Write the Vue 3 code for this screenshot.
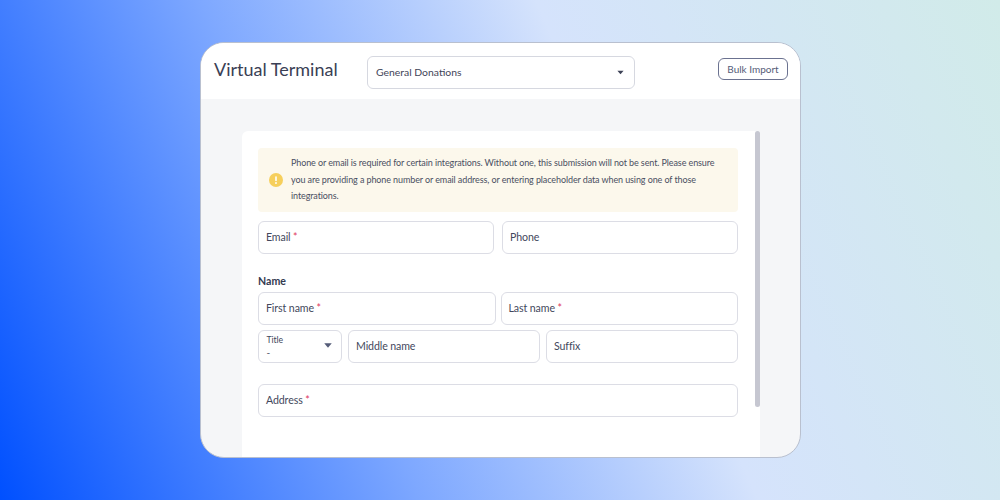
<script setup>
const row1 = [{ label: 'Email', req: true }, { label: 'Phone', req: false }]
const row2 = [{ label: 'First name', req: true }, { label: 'Last name', req: true }]
</script>

<template>
  <div class="page">
    <div class="window">
      <header class="header">
        <h1 class="title">Virtual Terminal</h1>
        <div class="select">
          <span>General Donations</span>
          <svg class="caret-small" viewBox="0 0 8 5"><path d="M0.5 0.5h7L4 4.5z" /></svg>
        </div>
        <button class="bulk">Bulk Import</button>
      </header>
      <main class="body">
        <div class="card">
          <div class="scrollbar"></div>
          <div class="alert">
            <svg class="alert-icon" viewBox="0 0 14 14">
              <circle cx="7" cy="7" r="7" fill="#f6cf5c" />
              <rect x="6.2" y="3.2" width="1.6" height="5" rx="0.8" fill="#fff" />
              <circle cx="7" cy="10" r="0.95" fill="#fff" />
            </svg>
            <p>Phone or email is required for certain integrations. Without one, this submission will not be sent. Please ensure you are providing a phone number or email address, or entering placeholder data when using one of those integrations.</p>
          </div>
          <div class="row row-a">
            <div v-for="f in row1" :key="f.label" class="field">{{ f.label }}<span v-if="f.req" class="req"> *</span></div>
          </div>
          <div class="section">Name</div>
          <div class="row row-b">
            <div v-for="f in row2" :key="f.label" class="field">{{ f.label }}<span v-if="f.req" class="req"> *</span></div>
          </div>
          <div class="row row-c">
            <div class="field title-field">
              <div class="title-text">
                <span class="mini">Title</span>
                <span class="dash">-</span>
              </div>
              <svg class="caret" viewBox="0 0 10 6"><path d="M0.3 0.3h9.4L5 5.7z" /></svg>
            </div>
            <div class="field middle">Middle name</div>
            <div class="field suffix">Suffix</div>
          </div>
          <div class="field address">Address<span class="req"> *</span></div>
        </div>
      </main>
    </div>
  </div>
</template>

<style scoped>
.page {
  width: 1000px;
  height: 500px;
  box-sizing: border-box;
  padding: 42px 0 0 200px;
  overflow: hidden;
  font-family: "Lato", "Noto Sans", sans-serif;
  color: #3d4256;
  background: linear-gradient(66deg, #0050ff 0%, #7ea8ff 34.6%, #d5e3fc 62%, #d1ebe9 100%);
}
.window {
  width: 601px;
  height: 416px;
  box-sizing: border-box;
  border: 1px solid #b9c0cf;
  border-radius: 24px;
  overflow: hidden;
  display: flex;
  flex-direction: column;
  background: #f5f6f8;
}
.header {
  flex: 0 0 56px;
  display: flex;
  align-items: flex-start;
  background: #fff;
}
.title {
  margin: 16px 0 0 13px;
  width: 153px;
  font-size: 18px;
  line-height: 20px;
  font-weight: 400;
  color: #3a4055;
  white-space: nowrap;
}
.select {
  margin-top: 13px;
  width: 268px;
  height: 33px;
  box-sizing: border-box;
  border: 1px solid #d6d8e0;
  border-radius: 6px;
  display: flex;
  align-items: center;
  justify-content: space-between;
  padding: 0 10px 1px 8px;
  font-size: 10.4px;
  color: #3f4458;
}
.caret-small {
  width: 7px;
  height: 5px;
  fill: #3d4256;
}
.bulk {
  margin: 15px 12px 0 auto;
  width: 70px;
  height: 22px;
  padding: 0;
  background: #fff;
  border: 1px solid #6b7290;
  border-radius: 6px;
  font: inherit;
  font-size: 10px;
  color: #555c78;
}
.body {
  flex: 1;
  min-height: 0;
  padding: 32px 40px 0 41px;
}
.card {
  position: relative;
  height: 100%;
  box-sizing: border-box;
  background: #fff;
  border-radius: 6px 6px 0 0;
  padding: 17px 22px 0 16px;
  display: flex;
  flex-direction: column;
}
.scrollbar {
  position: absolute;
  top: 0;
  right: 0.5px;
  width: 4.5px;
  height: 276px;
  border-radius: 3px;
  background: #c6c7d1;
}
.alert {
  height: 64px;
  box-sizing: border-box;
  display: flex;
  align-items: center;
  gap: 8px;
  padding: 0 10px 0 11px;
  background: #fcf8ec;
  border-radius: 4px;
}
.alert-icon {
  flex: 0 0 14px;
  width: 14px;
  height: 14px;
}
.alert p {
  margin: 0;
  font-size: 9px;
  letter-spacing: -0.1px;
  line-height: 16.5px;
  color: #4a4f62;
}
.row {
  display: flex;
}
.row-a {
  margin-top: 9px;
  gap: 8px;
}
.row-b {
  gap: 5px;
}
.row-c {
  margin-top: 5.5px;
  gap: 6px;
}
.field {
  flex: 1;
  height: 32.5px;
  box-sizing: border-box;
  border: 1px solid #dcdde5;
  border-radius: 6px;
  padding: 0 7px 1px;
  display: flex;
  align-items: center;
  white-space: pre;
  font-size: 10.6px;
  letter-spacing: -0.1px;
  color: #43485c;
}
.req {
  color: #e0395f;
}
.section {
  margin-top: 21px;
  height: 17.5px;
  font-size: 10.6px;
  line-height: 13px;
  font-weight: 700;
  color: #333950;
}
.title-field {
  flex: 0 0 84px;
  justify-content: space-between;
  padding-right: 9px;
}
.title-text {
  display: flex;
  flex-direction: column;
  padding: 1px 0 0 0.5px;
}
.mini {
  font-size: 8.7px;
  line-height: 12px;
}
.dash {
  font-size: 10px;
  line-height: 12px;
}
.caret {
  width: 8px;
  height: 5px;
  fill: #555c78;
}
.middle {
  flex: 0 0 192px;
}
.address {
  flex: none;
  margin-top: 21.5px;
}
</style>
